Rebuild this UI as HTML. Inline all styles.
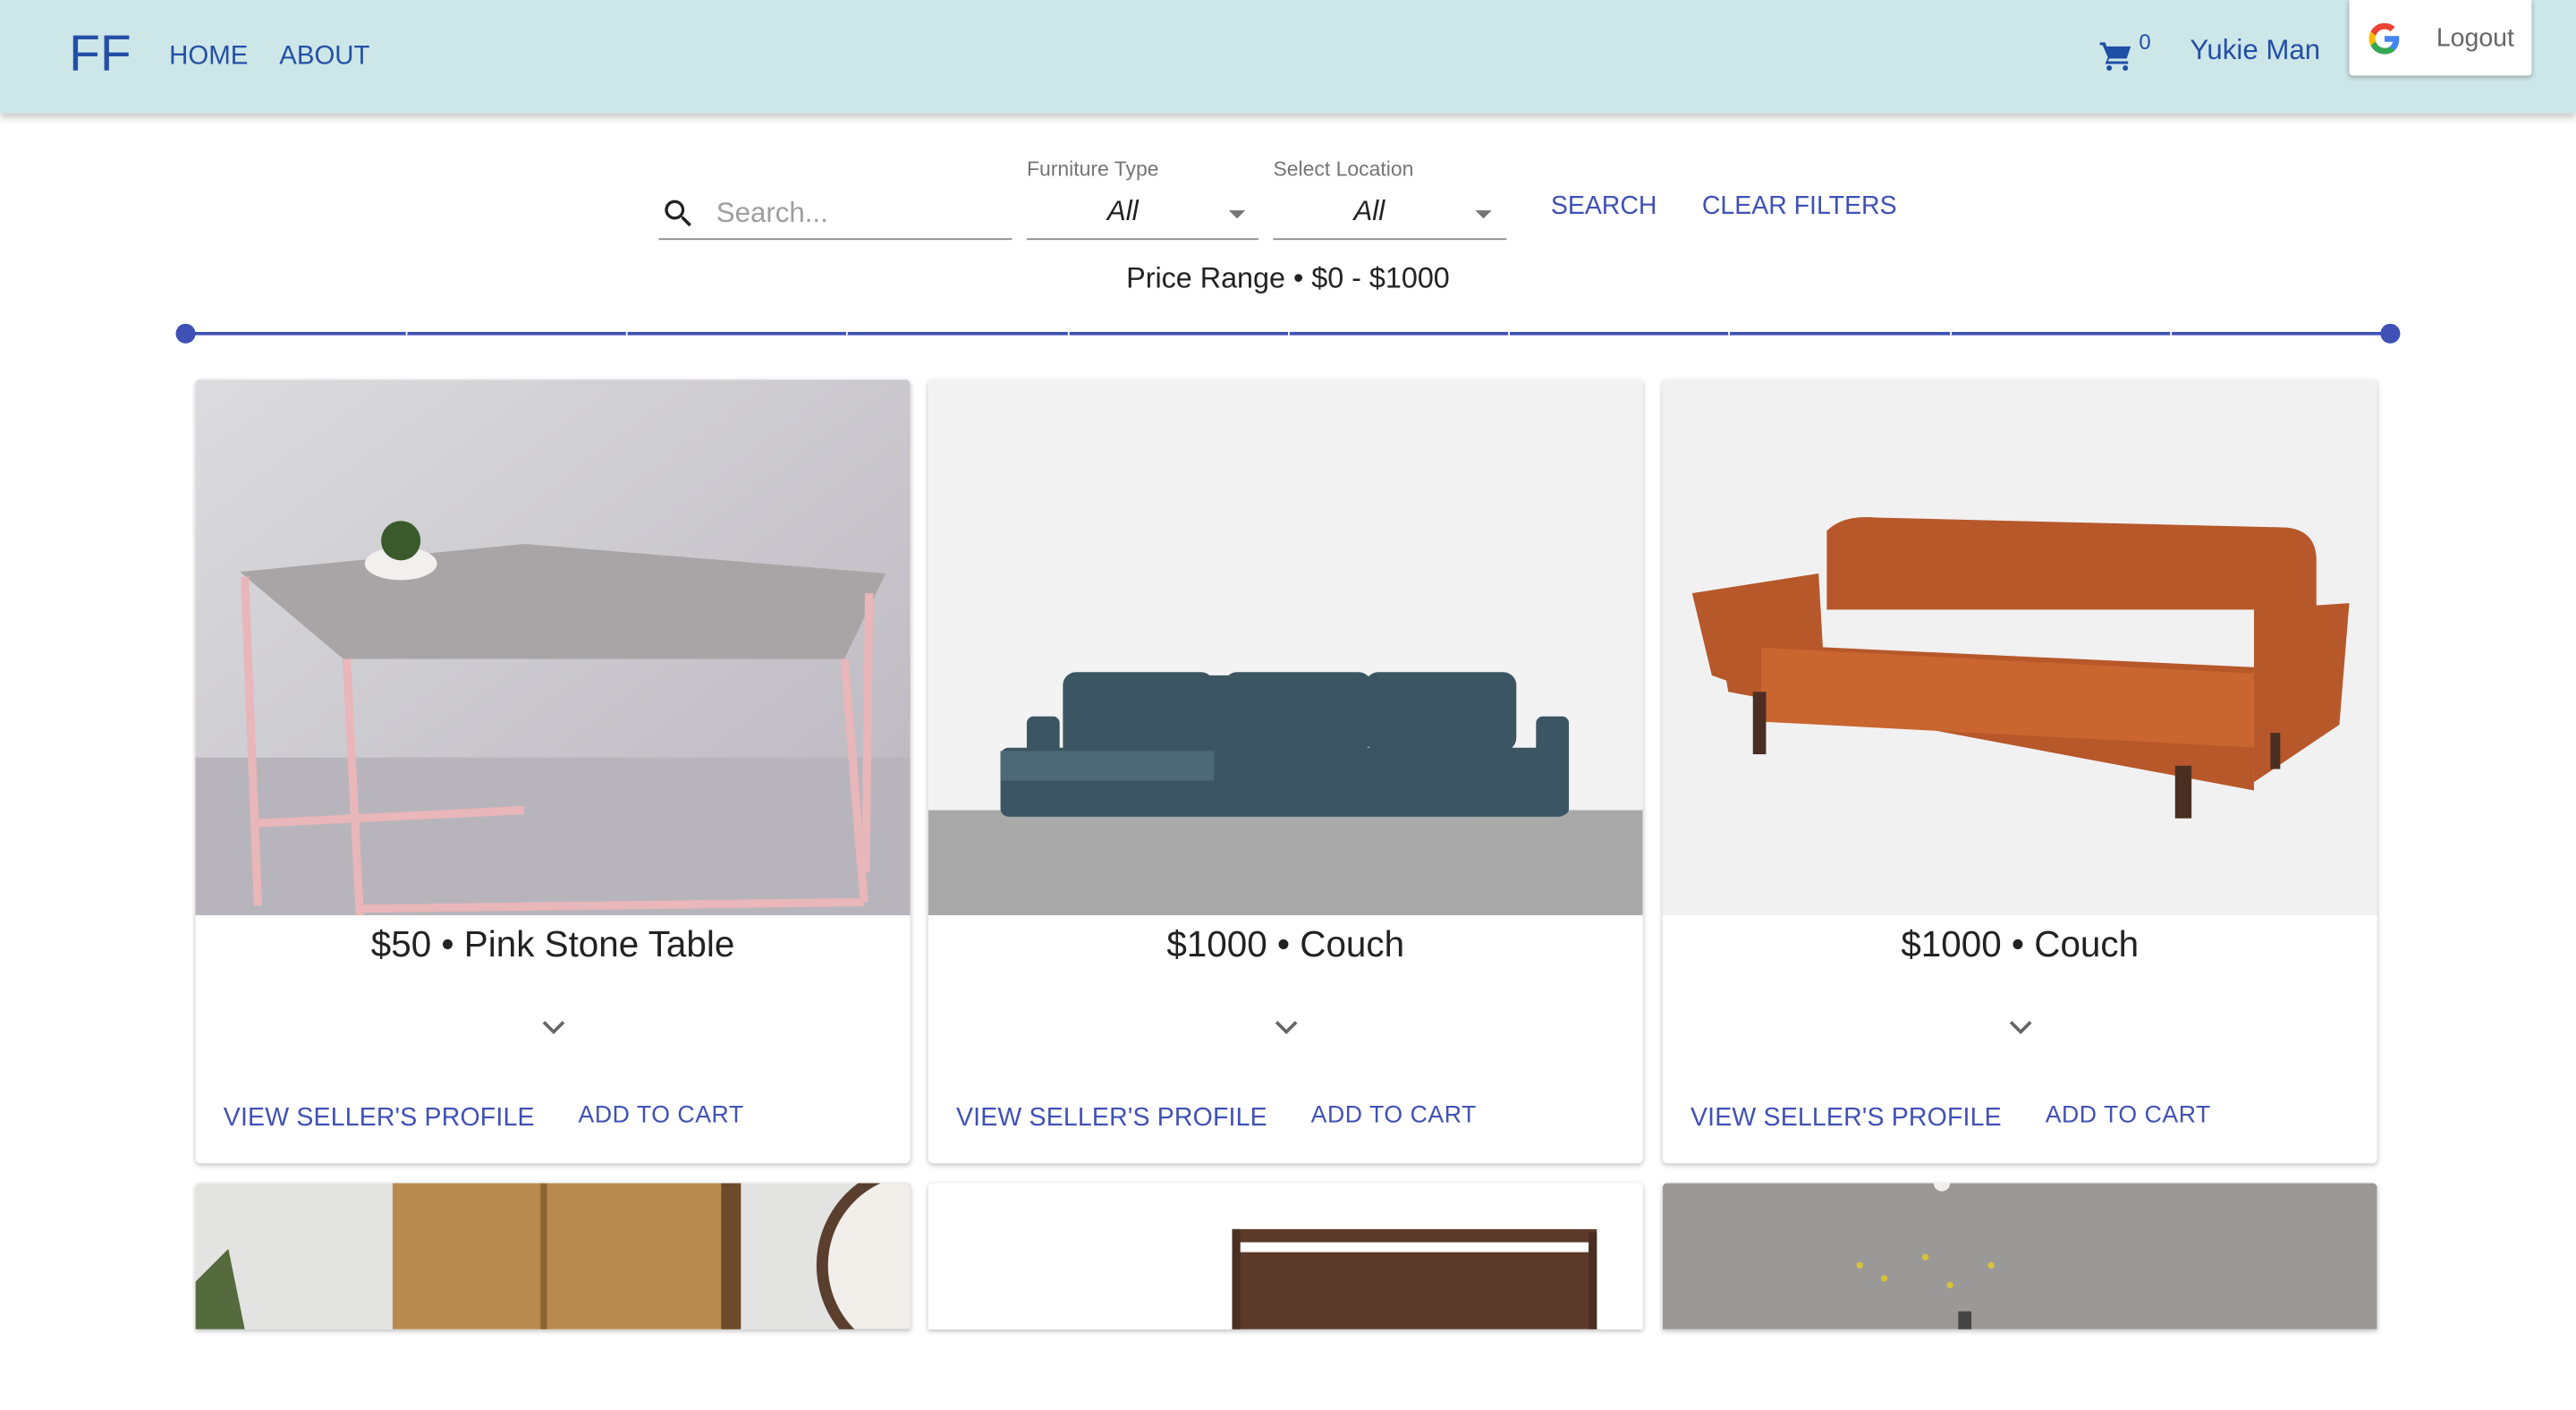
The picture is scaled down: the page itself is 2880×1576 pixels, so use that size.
<!DOCTYPE html>
<html><head><meta charset="utf-8"><style>
html,body{margin:0;padding:0;background:#fff;overflow:hidden}
body{width:2880px;height:1576px;position:relative}
#s{position:absolute;left:0;top:0;width:1568px;height:858px;transform:scale(1.8367);transform-origin:0 0;font-family:"Liberation Sans",sans-serif;overflow:hidden}
.a{position:absolute;white-space:nowrap}
.nav{left:0;top:0;width:1568px;height:69px;background:#cde6e8;box-shadow:0 2px 5px rgba(0,0,0,.25)}
.blue{color:#2350a6}
.ind{color:#3f51b5}
.card{position:absolute;width:435px;background:#fff;box-shadow:0 1px 3px rgba(0,0,0,.25);border-radius:3px;overflow:hidden}
.img{position:absolute;left:0;top:0;width:435px;height:326px}
.t{position:absolute;left:0;width:435px;text-align:center;top:331px;font-size:22px;color:#222}
.chev{position:absolute;left:211px;top:389px}
.b1{position:absolute;left:17px;top:441px;font-size:15.5px;color:#3f51b5;letter-spacing:.1px}
.b2{position:absolute;left:233px;top:440px;font-size:14.5px;color:#3f51b5;letter-spacing:.3px}
</style></head><body><div id="s">
<div class="a nav"></div>
<div class="a blue" style="left:42px;top:15px;font-size:31px">FF</div>
<div class="a blue" style="left:103px;top:26px;font-size:16px">HOME</div>
<div class="a blue" style="left:170px;top:26px;font-size:16px">ABOUT</div>
<svg class="a" style="left:1278px;top:25px" width="20" height="18" viewBox="0 0 24 22"><path fill="#1e4fa6" d="M0 1h4l1 3h18l-3 9H7l-1 2h15v2H4l2-5L2 3H0z"/><circle cx="7" cy="20" r="2" fill="#1e4fa6"/><circle cx="19" cy="20" r="2" fill="#1e4fa6"/></svg>
<div class="a blue" style="left:1302px;top:18px;font-size:13px">0</div>
<div class="a blue" style="left:1333px;top:21px;font-size:17px">Yukie Man</div>
<div class="a" style="left:1430px;top:0;width:111px;height:46px;background:#fff;box-shadow:0 1px 3px rgba(0,0,0,.3);border-radius:0 0 2px 2px"></div>
<svg class="a" style="left:1442px;top:14px" width="19" height="19" viewBox="0 0 48 48"><path fill="#EA4335" d="M24 9.5c3.5 0 6.6 1.2 9.1 3.6l6.8-6.8C35.8 2.4 30.3 0 24 0 14.6 0 6.6 5.4 2.7 13.3l7.9 6.2C12.5 13.6 17.7 9.5 24 9.5z"/><path fill="#4285F4" d="M46.5 24.5c0-1.6-.1-3.1-.4-4.5H24v9h12.7c-.6 2.9-2.2 5.4-4.7 7.1l7.7 6c4.5-4.2 6.8-10.4 6.8-17.6z"/><path fill="#FBBC05" d="M10.5 28.6c-.5-1.4-.8-3-.8-4.6s.3-3.2.8-4.6l-7.9-6.2C1 16.5 0 20.1 0 24s1 7.5 2.7 10.7l7.8-6.1z"/><path fill="#34A853" d="M24 48c6.5 0 11.9-2.1 15.9-5.8l-7.7-6c-2.2 1.5-5 2.3-8.2 2.3-6.3 0-11.6-4.2-13.5-10l-7.9 6.1C6.6 42.6 14.6 48 24 48z"/></svg>
<div class="a" style="left:1483px;top:15px;font-size:15.5px;color:#666">Logout</div>

<svg class="a" style="left:402px;top:119px" width="22" height="22" viewBox="0 0 24 24"><path fill="#222" d="M15.5 14h-.8l-.3-.3A6.5 6.5 0 1 0 9.5 16a6.5 6.5 0 0 0 4.2-1.6l.3.3v.8l5 5 1.5-1.5-5-5zm-6 0a4.5 4.5 0 1 1 0-9 4.5 4.5 0 0 1 0 9z"/></svg>
<div class="a" style="left:436px;top:120px;font-size:17px;color:#9e9e9e">Search...</div>
<div class="a" style="left:401px;top:145px;width:215px;height:1px;background:#8a8a8a"></div>
<div class="a" style="left:625px;top:96px;font-size:12.5px;color:#757575">Furniture Type</div>
<div class="a" style="left:674px;top:119px;font-size:17px;font-style:italic;color:#222">All</div>
<div class="a" style="left:748px;top:128px;width:0;height:0;border-left:5px solid transparent;border-right:5px solid transparent;border-top:5px solid #757575"></div>
<div class="a" style="left:625px;top:145px;width:141px;height:1px;background:#8a8a8a"></div>
<div class="a" style="left:775px;top:96px;font-size:12.5px;color:#757575">Select Location</div>
<div class="a" style="left:824px;top:119px;font-size:17px;font-style:italic;color:#222">All</div>
<div class="a" style="left:898px;top:128px;width:0;height:0;border-left:5px solid transparent;border-right:5px solid transparent;border-top:5px solid #757575"></div>
<div class="a" style="left:775px;top:145px;width:142px;height:1px;background:#8a8a8a"></div>
<div class="a ind" style="left:944px;top:117px;font-size:15.5px">SEARCH</div>
<div class="a ind" style="left:1036px;top:117px;font-size:15.5px">CLEAR FILTERS</div>
<div class="a" style="left:0;width:1568px;text-align:center;top:159px;font-size:17.6px;color:#222">Price Range • $0 - $1000</div>

<div class="a" style="left:113px;top:202px;width:1342px;height:2px;background:#3f51b5"></div>
<div class="a" style="left:247px;top:202px;width:1px;height:2px;background:#fff;box-shadow:134px 0 #fff,268px 0 #fff,403px 0 #fff,537px 0 #fff,671px 0 #fff,805px 0 #fff,940px 0 #fff,1074px 0 #fff"></div>
<div class="a" style="left:107px;top:197px;width:12px;height:12px;border-radius:50%;background:#3f51b5"></div>
<div class="a" style="left:1449px;top:197px;width:12px;height:12px;border-radius:50%;background:#3f51b5"></div>

<div class="card" style="left:119px;top:231px;height:477px">
<svg class="img" viewBox="0 0 435 326"><defs><linearGradient id="g1" x1="0" y1="0" x2="1" y2="1"><stop offset="0" stop-color="#dcdcdf"/><stop offset="1" stop-color="#b9b6bd"/></linearGradient></defs><rect width="435" height="326" fill="url(#g1)"/><rect y="230" width="435" height="96" fill="#b8b4bc"/><polygon points="27,117 200,100 420,118 395,170 90,170" fill="#a9a5a6"/><g stroke="#e9b6b9" stroke-width="5" fill="none"><line x1="30" y1="120" x2="38" y2="320"/><line x1="92" y1="170" x2="100" y2="326"/><line x1="395" y1="170" x2="407" y2="318"/><line x1="410" y1="130" x2="408" y2="300"/><line x1="100" y1="322" x2="407" y2="318"/><line x1="38" y1="270" x2="200" y2="262"/></g><ellipse cx="125" cy="112" rx="22" ry="10" fill="#f1f0ee"/><circle cx="125" cy="98" r="12" fill="#3b5a2c"/></svg>
<div class="t">$50 • Pink Stone Table</div>
<svg class="chev" width="14" height="10" viewBox="0 0 14 10"><path d="M1 2l6 6 6-6" stroke="#666" stroke-width="2" fill="none"/></svg>
<div class="b1">VIEW SELLER'S PROFILE</div><div class="b2">ADD TO CART</div>
</div>

<div class="card" style="left:565px;top:231px;height:477px">
<svg class="img" viewBox="0 0 435 326"><rect width="435" height="326" fill="#f3f3f3"/><rect y="262" width="435" height="64" fill="#a9a9a9"/><g fill="#3c5563"><rect x="82" y="178" width="92" height="60" rx="8"/><rect x="140" y="180" width="95" height="45" rx="8"/><rect x="180" y="178" width="90" height="48" rx="8"/><rect x="266" y="178" width="92" height="48" rx="8"/><rect x="44" y="224" width="345" height="42" rx="5"/><rect x="370" y="205" width="20" height="60" rx="4"/><rect x="60" y="205" width="20" height="35" rx="4"/></g><rect x="44" y="226" width="130" height="18" fill="#4d6977"/></svg>
<div class="t">$1000 • Couch</div>
<svg class="chev" width="14" height="10" viewBox="0 0 14 10"><path d="M1 2l6 6 6-6" stroke="#666" stroke-width="2" fill="none"/></svg>
<div class="b1">VIEW SELLER'S PROFILE</div><div class="b2">ADD TO CART</div>
</div>

<div class="card" style="left:1012px;top:231px;height:477px">
<svg class="img" viewBox="0 0 435 326"><rect width="435" height="326" fill="#f1f1f2"/><g fill="#b7582b"><path d="M100 92 Q110 82 130 84 L380 90 Q398 92 398 110 L398 140 L100 140z"/><path d="M18 130 L95 118 L100 205 L30 180z"/><path d="M360 140 L418 136 L412 210 L360 245z"/><path d="M35 160 L360 175 L360 250 L40 190z"/></g><rect x="60" y="160" width="300" height="45" fill="#c9662f" transform="skewY(3)"/><g fill="#4a2e22"><rect x="55" y="190" width="8" height="38"/><rect x="312" y="235" width="10" height="32"/><rect x="370" y="215" width="6" height="22"/></g></svg>
<div class="t">$1000 • Couch</div>
<svg class="chev" width="14" height="10" viewBox="0 0 14 10"><path d="M1 2l6 6 6-6" stroke="#666" stroke-width="2" fill="none"/></svg>
<div class="b1">VIEW SELLER'S PROFILE</div><div class="b2">ADD TO CART</div>
</div>

<div class="card" style="left:119px;top:720px;height:89px;border-radius:3px 3px 0 0">
<svg class="img" style="height:89px" viewBox="0 0 435 89"><rect width="435" height="89" fill="#e3e3e1"/><rect x="120" y="0" width="210" height="89" fill="#b98a4e"/><rect x="210" y="0" width="4" height="89" fill="#8d6535"/><rect x="320" y="0" width="12" height="89" fill="#6d4a2a"/><circle cx="440" cy="50" r="62" fill="#5a3e2e"/><circle cx="440" cy="50" r="55" fill="#f2efea"/><path d="M0 60 L20 40 L30 89 L0 89z" fill="#556b3e"/></svg>
</div>
<div class="card" style="left:565px;top:720px;height:89px;border-radius:3px 3px 0 0">
<svg class="img" style="height:89px" viewBox="0 0 435 89"><rect width="435" height="89" fill="#fff"/><rect x="185" y="28" width="222" height="61" fill="#5b3a2a"/><rect x="185" y="36" width="222" height="6" fill="#fff"/><rect x="185" y="28" width="5" height="61" fill="#4a2e22"/><rect x="402" y="30" width="5" height="59" fill="#4a2e22"/></svg>
</div>
<div class="card" style="left:1012px;top:720px;height:89px;border-radius:3px 3px 0 0">
<svg class="img" style="height:89px" viewBox="0 0 435 89"><rect width="435" height="89" fill="#9b9998"/><circle cx="170" cy="0" r="5" fill="#eee"/><g fill="#d9c23a"><circle cx="120" cy="50" r="2"/><circle cx="135" cy="58" r="2"/><circle cx="160" cy="45" r="2"/><circle cx="200" cy="50" r="2"/><circle cx="175" cy="62" r="2"/></g><rect x="180" y="78" width="8" height="11" fill="#444"/></svg>
</div>
</div></body></html>
